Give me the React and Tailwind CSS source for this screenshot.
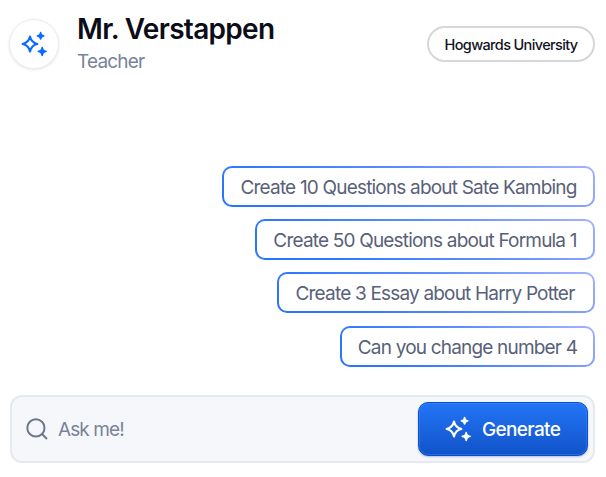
const font = "font-['Inter','Liberation_Sans',sans-serif]";

function Sparkles({ className }) {
  return (
    <svg viewBox="0 0 26 26" className={className} fill="none" aria-hidden="true">
      <path
        d="M9 5.6 C9.9 9.7 12.3 12.1 16.4 13 C12.3 13.9 9.9 16.3 9 20.4 C8.1 16.3 5.7 13.9 1.6 13 C5.7 12.1 8.1 9.7 9 5.6Z"
        stroke="currentColor"
        strokeWidth="2.1"
        strokeLinejoin="round"
      />
      <path
        d="M19.6 1.7 C19.8 4 20.4 4.6 22.7 4.8 C20.4 5 19.8 5.6 19.6 7.9 C19.4 5.6 18.8 5 16.5 4.8 C18.8 4.6 19.4 4 19.6 1.7Z"
        fill="currentColor"
        stroke="currentColor"
        strokeWidth="1.7"
        strokeLinejoin="round"
      />
      <path
        d="M21.2 16.5 C21.5 19.3 22.3 20.1 25 20.4 C22.3 20.7 21.5 21.5 21.2 24.3 C20.9 21.5 20.1 20.7 17.4 20.4 C20.1 20.1 20.9 19.3 21.2 16.5Z"
        fill="currentColor"
        stroke="currentColor"
        strokeWidth="1.7"
        strokeLinejoin="round"
      />
    </svg>
  );
}

const prompts = [
  { text: "Create 10 Questions about Sate Kambing", size: "w-[373px]", label: "pt-[3px]" },
  { text: "Create 50 Questions about Formula 1", size: "w-[340px] mt-3", label: "pt-[3px]" },
  { text: "Create 3 Essay about Harry Potter", size: "w-[318px] mt-3", label: "pt-[3px] pr-[2px]" },
  { text: "Can you change number 4", size: "w-[255px] mt-[13px]", label: "pt-[2px]" },
];

function Prompt({ text, size, label }) {
  return (
    <button
      className={`${size} flex h-[41px] rounded-[10px] bg-[linear-gradient(30deg,#2475ff_0%,#3078ff_20%,#6090ff_60%,#a5b2ff_100%)] p-[2px]`}
    >
      <span
        className={`${label} flex flex-1 items-center justify-center self-stretch rounded-[8px] bg-white text-[19px] leading-6 tracking-[-0.81px] whitespace-nowrap text-[#586178]`}
      >
        {text}
      </span>
    </button>
  );
}

export default function App() {
  return (
    <main className={`${font} flex h-[477px] w-[606px] flex-col overflow-hidden bg-white pr-[11px] pl-[10px]`}>
      <header className="flex h-[90px] items-start">
        <div className="mt-[19px] -ml-px flex size-[50px] items-center justify-center rounded-full border border-[#ececee] bg-white text-[#0b6bff] shadow-[0_1px_3px_rgba(0,0,0,0.1)]">
          <Sparkles className="size-[26px]" />
        </div>
        <div className="mt-[11px] ml-[18px] flex-1">
          <h1 className="text-[28px] leading-9 font-semibold tracking-[-0.7px] text-[#0b0d18]">Mr. Verstappen</h1>
          <p className="mt-[3px] text-[19px] leading-6 tracking-[-0.8px] text-[#78839a]">Teacher</p>
        </div>
        <span className="mt-[26px] flex h-[36px] w-[168px] items-center justify-center rounded-full border-2 border-[#d6d7da] pt-px text-[14.5px] font-medium tracking-[-0.64px] whitespace-nowrap text-[#12131f]">
          Hogwards University
        </span>
      </header>
      <section className="mt-[76px] flex flex-col items-end">
        {prompts.map((p) => (
          <Prompt key={p.text} {...p} />
        ))}
      </section>
      <div className="mt-[28px] flex h-[68px] items-center rounded-[12px] border-2 border-[#e6e9ee] bg-[#f6f7fa] pr-[5px] pl-[14px]">
        <svg viewBox="0 0 22 22" className="size-[22px]" fill="none" stroke="#6b7791" strokeWidth="2" aria-hidden="true">
          <circle cx="9.9" cy="9.9" r="8.6" />
          <path d="M16 16 L21 21" />
        </svg>
        <span className="ml-[10px] flex-1 pt-[3px] text-[19px] tracking-[-0.9px] text-[#78839a]">Ask me!</span>
        <button className="flex h-[54px] w-[170px] items-center rounded-[10px] border border-[#0b4fd0] bg-linear-to-b from-[#2375f6] to-[#1153c9] pl-[26px] text-white shadow-[inset_0_0_0_1px_rgba(80,150,255,0.35),0_1px_2px_rgba(20,60,140,0.3)]">
          <Sparkles className="size-[26px]" />
          <span className="ml-[11px] pt-[2px] text-[19px] font-medium tracking-[-0.65px]">Generate</span>
        </button>
      </div>
    </main>
  );
}
